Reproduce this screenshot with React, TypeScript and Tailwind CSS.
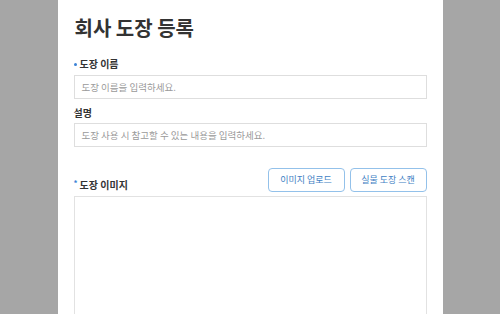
import React from "react";

const font = { fontFamily: '"Noto Sans CJK KR", "Noto Sans", sans-serif' };

const Label = ({ text, mark }: { text: string; mark?: "dot" | "star" }) => (
  <div className="flex items-center h-[12px] text-[10px] leading-[12px] font-bold text-[#333]">
    {mark === "dot" && <span className="w-[3px] h-[3px] rounded-full bg-[#3b82d6] mr-[3px]" />}
    {mark === "star" && <span className="text-[#3b82d6] mr-[2px] text-[8px] self-start leading-[8px]">*</span>}
    {text}
  </div>
);

const Input = ({ placeholder }: { placeholder: string }) => (
  <div className="h-[24px] border border-[#dedede] flex items-center px-[7px] text-[9.5px] text-[#9a9a9a]">
    {placeholder}
  </div>
);

const OutlineButton = ({ children }: { children: React.ReactNode }) => (
  <button className="w-[77px] h-[24px] rounded-[4px] border-[1.5px] border-[#93c1ea] text-[9px] text-[#3f7fc4] bg-white">
    {children}
  </button>
);

export default function App() {
  return (
    <div className="w-[500px] h-[314px] bg-[#a6a6a6] overflow-hidden" style={font}>
      <div className="mx-auto w-[385px] h-full bg-white px-4 pt-[13px]">
        <h1 className="text-[20px] leading-[30px] font-bold text-[#333] pl-px">회사 도장 등록</h1>

        <div className="mt-[15px]">
          <Label text="도장 이름" mark="dot" />
          <div className="mt-[5px]">
            <Input placeholder="도장 이름을 입력하세요." />
          </div>
        </div>

        <div className="mt-[8px]">
          <Label text="설명" />
          <div className="mt-[4px]">
            <Input placeholder="도장 사용 시 참고할 수 있는 내용을 입력하세요." />
          </div>
        </div>

        <div className="mt-[21px] flex items-end justify-between">
          <div className="pb-[1px]">
            <Label text="도장 이미지" mark="star" />
          </div>
          <div className="flex gap-[5px]">
            <OutlineButton>이미지 업로드</OutlineButton>
            <OutlineButton>실물 도장 스캔</OutlineButton>
          </div>
        </div>

        <div className="mt-[4px] h-[140px] border border-[#e2e2e2]" />
      </div>
    </div>
  );
}
